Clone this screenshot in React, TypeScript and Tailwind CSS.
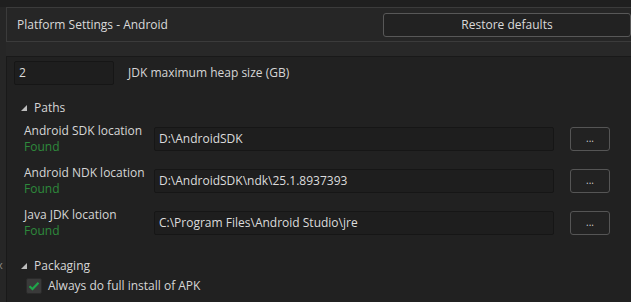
import React from 'react';

const font = { fontFamily: '"Open Sans", "Noto Sans", sans-serif' };

// ─── Section toggle ───────────────────────────────────────────────────────────
function SectionTitle({ label }: { label: string }) {
  return (
    <div className="flex items-center h-[20px] pl-[13px] text-[12px] text-[#d6d6d6]">
      <svg width="8" height="8" viewBox="0 0 8 8" className="mr-[6px] mt-[-1px]">
        <polygon points="7,1 7,7 1,7" fill="#bdbdbd" />
      </svg>
      {label}
    </div>
  );
}

// ─── Path row ─────────────────────────────────────────────────────────────────
function PathRow({ label, value }: { label: string; value: string }) {
  return (
    <div className="flex items-start h-[32px] pl-[17px]">
      <div className="w-[130px] leading-[16px] text-[12px] whitespace-nowrap">
        <div className="text-[#d6d6d6]">{label}</div>
        <div className="text-[#2e8a3c]">Found</div>
      </div>
      <div className="mt-[4px] w-[400px] h-[24px] bg-[#1e1e1e] border border-[#161616] rounded-[2px] flex items-center pl-[4px] text-[12px] text-[#dcdcdc]">
        {value}
      </div>
      <button className="mt-[4px] ml-[16px] w-[40px] h-[24px] border border-[#555555] rounded-[3px] bg-[#222222] text-[10px] text-[#cfcfcf] leading-none pb-[3px]">
        ...
      </button>
    </div>
  );
}

export default function App() {
  return (
    <div style={font} className="w-[631px] h-[302px] overflow-hidden bg-[#222222] flex flex-col">
      <div className="h-[7px] bg-[#1f1f1f] shrink-0" />
      <div className="flex flex-1 min-h-0">
        {/* left gutter */}
        <div className="w-[6px] shrink-0 bg-[#262626] relative">
          <span className="absolute left-[-3px] top-[250px] text-[11px] text-[#8a8a8a]">x</span>
        </div>
        <div className="flex-1 flex flex-col min-w-0">
          {/* header */}
          <div className="h-[35px] shrink-0 border-t border-b border-l border-[#3b3b3b] bg-[#262626] flex items-center">
            <span className="pl-[10px] text-[12px] text-[#dadada] w-[379px]">Platform Settings - Android</span>
            <button className="w-[248px] h-[24px] shrink-0 border border-[#585858] rounded-[3px] bg-[#222222] text-[12px] text-[#dadada]">
              Restore defaults
            </button>
          </div>
          <div className="h-[15px] shrink-0 bg-[#282828] border-b border-[#191919]" />
          {/* content */}
          <div className="flex-1 bg-[#212121] border-l border-[#191919] flex flex-col">
            <div className="flex items-center mt-[4px] pl-[7px]">
              <div className="w-[100px] h-[24px] bg-[#1e1e1e] border border-[#161616] rounded-[2px] flex items-center pl-[4px] text-[12px] text-[#dcdcdc]">
                2
              </div>
              <span className="ml-[14px] text-[12px] text-[#d6d6d6]">JDK maximum heap size (GB)</span>
            </div>
            <div className="mt-[13px]">
              <SectionTitle label="Paths" />
            </div>
            <div className="mt-[5px] flex flex-col gap-[10px]">
              <PathRow label="Android SDK location" value="D:\AndroidSDK" />
              <PathRow label="Android NDK location" value="D:\AndroidSDK\ndk\25.1.8937393" />
              <PathRow label="Java JDK location" value="C:\Program Files\Android Studio\jre" />
            </div>
            <div className="mt-[17px]">
              <SectionTitle label="Packaging" />
            </div>
            <div className="flex items-center mt-[2px] pl-[19px] h-[16px]">
              <div className="w-[16px] h-[16px] bg-[#3a3a3a] border border-[#2a2a2a] rounded-[2px] flex items-center justify-center">
                <svg width="12" height="10" viewBox="0 0 12 10">
                  <path d="M1.5 5.2 L4.5 8 L10.5 1.8" stroke="#1fa64a" strokeWidth="2.2" fill="none" />
                </svg>
              </div>
              <span className="ml-[6px] text-[12px] text-[#d6d6d6]">Always do full install of APK</span>
            </div>
          </div>
        </div>
      </div>
    </div>
  );
}
